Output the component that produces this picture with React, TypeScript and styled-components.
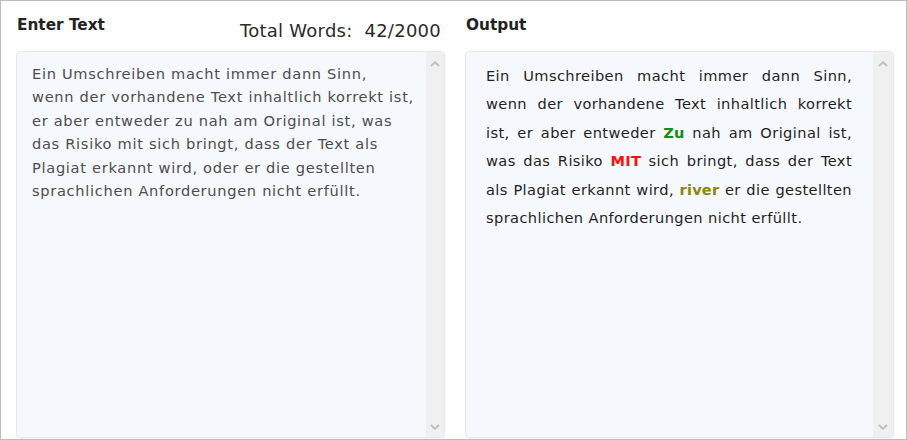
import React from "react";
import styled, { createGlobalStyle } from "styled-components";

const Global = createGlobalStyle`
  html, body { margin: 0; padding: 0; background: #ffffff; }
  body { font-family: "DejaVu Sans", "Noto Sans", sans-serif; }
`;

const Frame = styled.div`
  box-sizing: border-box;
  width: 907px;
  height: 440px;
  border: 1px solid #bcbcbc;
  padding: 0 12px 1px 15px;
  display: grid;
  grid-template-columns: 429px 429px;
  column-gap: 20px;
`;

const Column = styled.div`
  display: flex;
  flex-direction: column;
  min-height: 0;
`;

const Header = styled.div`
  height: 50px;
  display: flex;
  align-items: flex-start;
  justify-content: space-between;
  padding: 13px 4px 0 1px;
  box-sizing: border-box;
  color: #222222;
`;

const Title = styled.div`
  font-size: 15.3px;
  font-weight: 700;
  line-height: 22px;
`;

const Count = styled.div`
  font-size: 18px;
  line-height: 22px;
  margin-top: 6px;
  letter-spacing: 0.25px;
  color: #2a2a2a;
`;

const Box = styled.div`
  flex: 1;
  display: flex;
  background: #f5f8fd;
  border: 1px solid #e4e8ee;
  border-radius: 4px;
  overflow: hidden;
  box-shadow: 0 1px 1px rgba(0, 0, 0, 0.04);
`;

const Body = styled.div<{ $out?: boolean }>`
  flex: 1;
  box-sizing: border-box;
  padding: ${(p) => (p.$out ? "10px 21px 0 20px" : "10px 12px 0 15px")};
  font-size: 14.6px;
  letter-spacing: ${(p) => (p.$out ? "0.4px" : "0.7px")};
  line-height: ${(p) => (p.$out ? "28.4px" : "23.4px")};
  color: ${(p) => (p.$out ? "#1f1f1f" : "#4d4d4d")};
`;

const Line = styled.div<{ $just?: boolean }>`
  text-align: ${(p) => (p.$just ? "justify" : "left")};
  text-align-last: ${(p) => (p.$just ? "justify" : "left")};
  white-space: ${(p) => (p.$just ? "normal" : "nowrap")};
`;

const Mark = styled.span<{ $c: string }>`
  color: ${(p) => p.$c};
  font-weight: 700;
  letter-spacing: 0.2px;
`;

const Track = styled.div`
  width: 20px;
  background: #f0f0f0;
  display: flex;
  flex-direction: column;
  justify-content: space-between;
  align-items: center;
  padding: 9px 0 7px;
  box-sizing: border-box;
`;

const Chevron = ({ up }: { up?: boolean }) => (
  <svg width="10" height="6" viewBox="0 0 10 6">
    <path
      d={up ? "M1 5 L5 1.2 L9 5" : "M1 1 L5 4.8 L9 1"}
      fill="none"
      stroke="#bdbdc2"
      strokeWidth="1.8"
    />
  </svg>
);

const Scrollbar = () => (
  <Track>
    <Chevron up />
    <Chevron />
  </Track>
);

const inputLines = [
  "Ein Umschreiben macht immer dann Sinn,",
  "wenn der vorhandene Text inhaltlich korrekt ist,",
  "er aber entweder zu nah am Original ist, was",
  "das Risiko mit sich bringt, dass der Text als",
  "Plagiat erkannt wird, oder er die gestellten",
  "sprachlichen Anforderungen nicht erfüllt.",
];

export default function App() {
  return (
    <>
      <Global />
      <Frame>
        <Column>
          <Header>
            <Title>Enter Text</Title>
            <Count>Total Words:&nbsp; 42/2000</Count>
          </Header>
          <Box>
            <Body>
              {inputLines.map((l) => (
                <Line key={l}>{l}</Line>
              ))}
            </Body>
            <Scrollbar />
          </Box>
        </Column>
        <Column>
          <Header>
            <Title>Output</Title>
          </Header>
          <Box>
            <Body $out>
              <Line $just>Ein Umschreiben macht immer dann Sinn,</Line>
              <Line $just>wenn der vorhandene Text inhaltlich korrekt</Line>
              <Line $just>
                ist, er aber entweder <Mark $c="#178a17">Zu</Mark> nah am Original ist,
              </Line>
              <Line $just>
                was das Risiko <Mark $c="#ff0d0d">MIT</Mark> sich bringt, dass der Text
              </Line>
              <Line $just>
                als Plagiat erkannt wird, <Mark $c="#8a8a00">river</Mark> er die gestellten
              </Line>
              <Line>sprachlichen Anforderungen nicht erfüllt.</Line>
            </Body>
            <Scrollbar />
          </Box>
        </Column>
      </Frame>
    </>
  );
}
